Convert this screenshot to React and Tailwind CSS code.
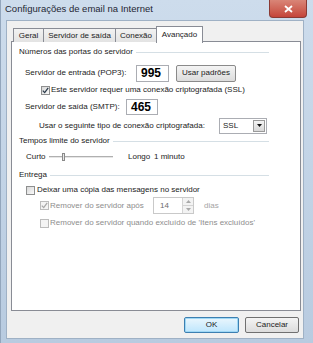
const Check = ({ color = "#2a2a2a" }) => (
  <svg width="7" height="7" viewBox="0 0 7 7" className="block">
    <path d="M0.8 3.6 L2.7 5.6 L6.2 0.9" fill="none" stroke={color} strokeWidth="1.3" />
  </svg>
);

const CheckBox = ({ checked, disabled }) => (
  <div
    className={`w-[9px] h-[9px] border flex items-center justify-center shrink-0 ${
      disabled
        ? "border-[#bcbcbc] bg-[#f4f4f4]"
        : "border-[#8e8f8f] bg-linear-to-br from-[#d8d8d8] to-[#fafafa]"
    }`}
  >
    {checked && <Check color={disabled ? "#a8a8a8" : "#2a3a4a"} />}
  </div>
);

const GroupHeader = ({ title }) => (
  <div className="flex items-center h-[12px] ml-[7px] mr-[31px]">
    <span className="whitespace-nowrap">{title}</span>
    <div className="flex-1 h-px bg-[#d5dfe5] ml-[3px]" />
  </div>
);

export default function App() {
  return (
    <div className="w-[313px] h-[343px] flex flex-col bg-linear-to-b from-[#cddcec] to-[#b8cbe0] border-l border-[#93a6bc] font-['Liberation_Sans',Arial,sans-serif] text-[8px] text-[#1b1b1b] overflow-hidden">
      {/* title bar */}
      <div className="h-[20px] flex items-start justify-between shrink-0">
        <span className="ml-[4px] mt-[4px] text-[9.5px] text-[#1e2633] leading-none whitespace-nowrap">
          Configurações de email na Internet
        </span>
        <div className="w-[38px] h-[18px] mr-[6px] rounded-b-[4px] border border-t-0 border-[#8a3a34] bg-linear-to-b from-[#d98577] to-[#c4443a] flex items-center justify-center">
          <svg width="9" height="8" viewBox="0 0 9 8">
            <path d="M1 1 L8 7 M8 1 L1 7" stroke="#ffffff" strokeWidth="1.8" />
          </svg>
        </div>
      </div>

      {/* client area */}
      <div className="ml-[5px] w-[298px] h-[319px] bg-[#f0f0f0] border border-[#9fb1c5] flex flex-col">
        {/* tabs */}
        <div className="h-[16px] mt-[5px] ml-[6px] flex items-end relative z-10">
          <div className="h-[14px] w-[31px] border border-b-0 border-[#898c95] bg-linear-to-b from-[#f2f2f2] to-[#e3e3e3] flex items-center justify-center">
            Geral
          </div>
          <div className="h-[14px] w-[72px] border border-b-0 border-l-0 border-[#898c95] bg-linear-to-b from-[#f2f2f2] to-[#e3e3e3] flex items-center justify-center whitespace-nowrap">
            Servidor de saída
          </div>
          <div className="h-[14px] w-[41px] border border-b-0 border-l-0 border-[#898c95] bg-linear-to-b from-[#f2f2f2] to-[#e3e3e3] flex items-center justify-center">
            Conexão
          </div>
          <div className="h-[17px] w-[47px] -mb-px -ml-px border border-b-0 border-[#898c95] bg-white flex items-start pt-[2px] justify-center">
            Avançado
          </div>
        </div>

        {/* panel */}
        <div className="ml-[4px] -mt-px w-[290px] h-[270px] bg-white border border-[#898c95] flex flex-col">
          <div className="mt-[4px]">
            <GroupHeader title="Números das portas do servidor" />
          </div>

          <div className="mt-[5px] h-[20px] flex items-center ml-[13px]">
            <span className="w-[111px] whitespace-nowrap">Servidor de entrada (POP3):</span>
            <div className="w-[33px] h-[17px] border border-[#abadb3] flex items-center pl-[4px] text-[12px] font-bold text-black">
              995
            </div>
            <div className="ml-[7px] w-[60px] h-[17px] border border-[#8a8a8a] rounded-[2px] bg-linear-to-b from-[#f4f4f4] to-[#dcdcdc] flex items-center justify-center whitespace-nowrap">
              Usar padrões
            </div>
          </div>

          <div className="mt-[2px] h-[10px] flex items-center ml-[29px]">
            <CheckBox checked />
            <span className="ml-[1px] whitespace-nowrap">
              Este servidor requer uma conexão criptografada (SSL)
            </span>
          </div>

          <div className="mt-[3px] h-[17px] flex items-center ml-[13px]">
            <span className="w-[101px] whitespace-nowrap">Servidor de saída (SMTP):</span>
            <div className="w-[32px] h-[16px] border border-[#abadb3] flex items-center pl-[4px] text-[12px] font-bold text-black">
              465
            </div>
          </div>

          <div className="mt-[2px] h-[17px] flex items-center ml-[27px]">
            <span className="w-[180px] whitespace-nowrap">
              Usar o seguinte tipo de conexão criptografada:
            </span>
            <div className="w-[48px] h-[16px] border border-[#abadb3] flex items-center">
              <span className="flex-1 pl-[3px]">SSL</span>
              <div className="w-[12px] h-[12px] mr-[1px] border border-[#9a9a9a] bg-linear-to-b from-[#f4f4f4] to-[#d8d8d8] flex items-center justify-center">
                <svg width="5" height="3" viewBox="0 0 5 3">
                  <path d="M0 0 L5 0 L2.5 3 Z" fill="#111" />
                </svg>
              </div>
            </div>
          </div>

          <div className="mt-[1px]">
            <GroupHeader title="Tempos limite do servidor" />
          </div>

          <div className="mt-[4px] h-[12px] flex items-center ml-[14px]">
            <span className="w-[23px]">Curto</span>
            <div className="w-[64px] h-[10px] relative flex items-center">
              <div className="w-full h-[2px] border-t border-b border-t-[#b0b0b0] border-b-[#e6e6e6]" />
              <div className="absolute left-[13px] top-[1px] w-[3px] h-[8px] border border-[#8a8a8a] bg-[#e8e8e8]" />
            </div>
            <span className="ml-[15px] w-[26px]">Longo</span>
            <span className="whitespace-nowrap">1 minuto</span>
          </div>

          <div className="mt-[6px]">
            <GroupHeader title="Entrega" />
          </div>

          <div className="mt-[4px] h-[10px] flex items-center ml-[14px]">
            <CheckBox />
            <span className="ml-[2px] whitespace-nowrap">
              Deixar uma cópia das mensagens no servidor
            </span>
          </div>

          <div className="mt-[2px] h-[17px] flex items-center ml-[28px] text-[#8d8d8d]">
            <CheckBox checked disabled />
            <span className="ml-[1px] w-[103px] whitespace-nowrap">Remover do servidor após</span>
            <div className="w-[41px] h-[17px] border border-[#c9c9c9] flex items-center">
              <span className="flex-1 pl-[6px] text-[#6d6d6d]">14</span>
              <div className="w-[11px] h-[15px] flex flex-col border-l border-[#d4d4d4]">
                <div className="flex-1 flex items-center justify-center border-b border-[#d4d4d4] bg-[#f3f3f3]">
                  <svg width="5" height="3" viewBox="0 0 5 3">
                    <path d="M0 3 L5 3 L2.5 0 Z" fill="#a9a9a9" />
                  </svg>
                </div>
                <div className="flex-1 flex items-center justify-center bg-[#f3f3f3]">
                  <svg width="5" height="3" viewBox="0 0 5 3">
                    <path d="M0 0 L5 0 L2.5 3 Z" fill="#a9a9a9" />
                  </svg>
                </div>
              </div>
            </div>
            <span className="ml-[10px] text-[#a4a4a4]">dias</span>
          </div>

          <div className="mt-[4px] h-[10px] flex items-center ml-[28px] text-[#8d8d8d]">
            <CheckBox disabled />
            <span className="ml-[1px] whitespace-nowrap">
              Remover do servidor quando excluído de 'Itens excluídos'
            </span>
          </div>
        </div>

        {/* buttons */}
        <div className="mt-[6px] h-[16px] flex justify-end mr-[4px] gap-[6px]">
          <div className="w-[55px] h-[16px] border border-[#3c7fb1] rounded-[2px] bg-linear-to-b from-[#eaf6fd] to-[#bee6fd] shadow-[0_0_0_1px_#9fd8f5_inset] flex items-center justify-center">
            OK
          </div>
          <div className="w-[54px] h-[16px] border border-[#707070] rounded-[2px] bg-linear-to-b from-[#f4f4f4] to-[#dcdcdc] flex items-center justify-center">
            Cancelar
          </div>
        </div>
      </div>
    </div>
  );
}
